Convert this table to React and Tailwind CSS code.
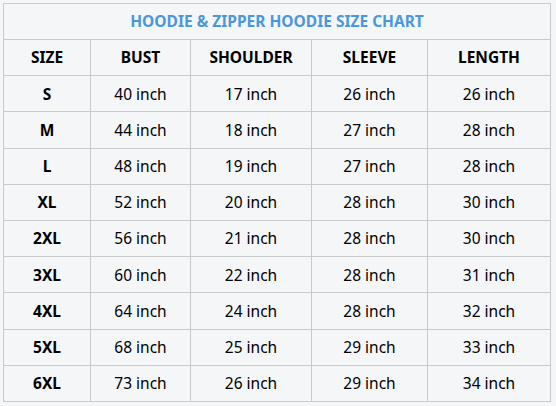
const rows = [
  ['S', '40 inch', '17 inch', '26 inch', '26 inch'],
  ['M', '44 inch', '18 inch', '27 inch', '28 inch'],
  ['L', '48 inch', '19 inch', '27 inch', '28 inch'],
  ['XL', '52 inch', '20 inch', '28 inch', '30 inch'],
  ['2XL', '56 inch', '21 inch', '28 inch', '30 inch'],
  ['3XL', '60 inch', '22 inch', '28 inch', '31 inch'],
  ['4XL', '64 inch', '24 inch', '28 inch', '32 inch'],
  ['5XL', '68 inch', '25 inch', '29 inch', '33 inch'],
  ['6XL', '73 inch', '26 inch', '29 inch', '34 inch'],
];

const headers = ['SIZE', 'BUST', 'SHOULDER', 'SLEEVE', 'LENGTH'];
const widths = ['w-[87px]', 'w-[100px]', 'w-[121px]', 'w-[116px]', 'w-[123px]'];

export default function App() {
  return (
    <div className="w-[556px] h-[406px] bg-[#f5f6f8] pt-[3px] pl-[3px] font-['Noto_Sans','Open_Sans',sans-serif] text-[15.5px] text-black">
      <table className="border-collapse border border-[#c9cacc] table-fixed">
        <thead>
          <tr>
            <th
              colSpan={5}
              className="h-[36px] pt-px border border-[#c9cacc] text-center text-[15.5px] font-bold text-[#4a97dd]"
            >
              HOODIE &amp; ZIPPER HOODIE SIZE CHART
            </th>
          </tr>
          <tr>
            {headers.map((h, i) => (
              <th
                key={h}
                className={`${widths[i]} h-[36.2px] pt-px border border-[#c9cacc] text-center font-bold`}
              >
                {h}
              </th>
            ))}
          </tr>
        </thead>
        <tbody>
          {rows.map((r) => (
            <tr key={r[0]}>
              {r.map((c, i) => (
                <td
                  key={i}
                  className={`h-[36.2px] pt-px border border-[#c9cacc] text-center ${i === 0 ? 'font-bold' : ''}`}
                >
                  {c}
                </td>
              ))}
            </tr>
          ))}
        </tbody>
      </table>
    </div>
  );
}
